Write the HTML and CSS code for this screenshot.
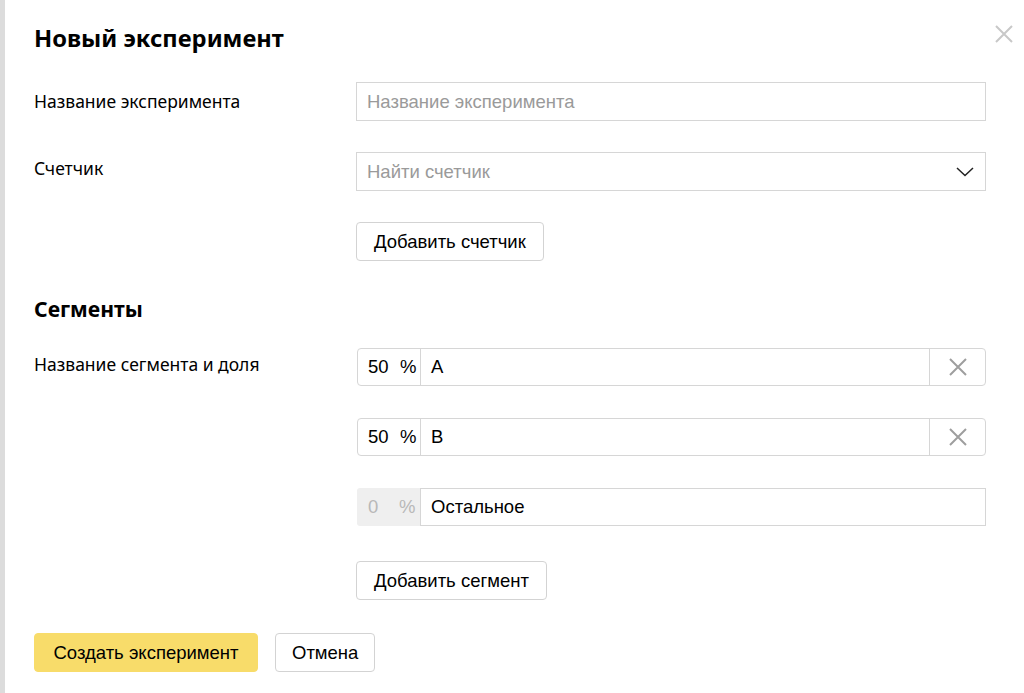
FILE: index.html
```html
<!DOCTYPE html>
<html lang="ru">
<head>
<meta charset="utf-8">
<title>Новый эксперимент</title>
<link rel="stylesheet" href="styles.css">
</head>
<body>
<div class="strip"></div>
<main class="dialog">
  <button class="close" aria-label="Закрыть">
    <svg width="18" height="18" viewBox="0 0 18 18"><path d="M1 1L17 17M17 1L1 17" stroke="#c8c8c8" stroke-width="2" fill="none"/></svg>
  </button>
  <h1 class="title">Новый эксперимент</h1>

  <div class="row row-first">
    <div class="label">Название эксперимента</div>
    <div class="field"><input class="input" placeholder="Название эксперимента"></div>
  </div>

  <div class="row row-gap">
    <div class="label label-counter">Счетчик</div>
    <div class="field">
      <div class="select">
        <span class="placeholder">Найти счетчик</span>
        <svg class="chevron" width="18" height="10" viewBox="0 0 18 10"><path d="M1 1L9 8.5L17 1" stroke="#222" stroke-width="1.5" fill="none"/></svg>
      </div>
    </div>
  </div>

  <div class="row row-gap">
    <div class="label"></div>
    <div class="field"><button class="btn">Добавить счетчик</button></div>
  </div>

  <h2 class="subtitle">Сегменты</h2>

  <div class="row row-seg-first">
    <div class="label label-seg">Название сегмента и доля</div>
    <div class="field segs">
      <div class="seg">
        <div class="pct"><span class="num">50</span><span class="sign">%</span></div>
        <div class="name">A</div>
        <div class="del"><svg width="18" height="18" viewBox="0 0 18 18"><path d="M1 1L17 17M17 1L1 17" stroke="#9e9e9e" stroke-width="2" fill="none"/></svg></div>
      </div>
      <div class="seg">
        <div class="pct"><span class="num">50</span><span class="sign">%</span></div>
        <div class="name">B</div>
        <div class="del"><svg width="18" height="18" viewBox="0 0 18 18"><path d="M1 1L17 17M17 1L1 17" stroke="#9e9e9e" stroke-width="2" fill="none"/></svg></div>
      </div>
      <div class="seg seg-rest">
        <div class="pct pct-disabled"><span class="num">0</span><span class="sign">%</span></div>
        <div class="name name-rest">Остальное</div>
      </div>
    </div>
  </div>

  <div class="row row-addseg">
    <div class="label"></div>
    <div class="field"><button class="btn">Добавить сегмент</button></div>
  </div>

  <div class="footer">
    <button class="btn btn-primary">Создать эксперимент</button>
    <button class="btn btn-cancel">Отмена</button>
  </div>
</main>
</body>
</html>
```
FILE: styles.css
```css
* { box-sizing: border-box; }
html, body { margin: 0; height: 100%; }
body {
  display: flex;
  background: #fff;
  color: #000;
  font-family: "Noto Sans", "Open Sans", sans-serif;
}
.strip {
  width: 5px;
  flex: none;
  background: #dcdcdc;
}
.dialog {
  position: relative;
  flex: 1;
  padding: 0 38px 0 29px;
}
.close {
  position: absolute;
  top: 24px;
  right: 10px;
  width: 20px;
  height: 20px;
  padding: 1px;
  border: 0;
  background: none;
}
.title {
  margin: 21px 0 0;
  font-size: 23.7px;
  line-height: 34px;
  font-weight: 700;
}
.subtitle {
  margin: 33px 0 0;
  font-size: 21.2px;
  line-height: 30px;
  font-weight: 700;
}
.row {
  display: grid;
  grid-template-columns: 322px 1fr;
}
.row-first { margin-top: 27px; }
.row-gap { margin-top: 31px; }
.row-seg-first { margin-top: 24px; }
.row-addseg { margin-top: 35px; }
.label {
  font-size: 17.5px;
  line-height: 24px;
  padding-top: 7px;
}
.label-counter { padding-top: 4px; }
.label-seg { padding-top: 4px; }
.input, .select {
  display: flex;
  align-items: center;
  width: 100%;
  height: 39px;
  margin: 0;
  padding: 0 10px;
  border: 1px solid #d6d6d6;
  border-radius: 0;
  font: 18.5px "Liberation Sans", Arial, sans-serif;
  color: #000;
  outline: none;
}
.input::placeholder { color: #9a9a9a; }
.placeholder { color: #9a9a9a; flex: 1; }
.chevron { margin-right: 1px; }
.btn {
  height: 39px;
  padding: 0 17px;
  border: 1px solid #d3d3d3;
  border-radius: 4px;
  background: #fff;
  font: 18.5px "Liberation Sans", Arial, sans-serif;
  color: #000;
}
.btn-cancel { padding: 0 16px; }
.btn-primary {
  background: #f8dc6a;
  border-color: #f8dc6a;
  width: 224px;
  padding: 0;
}
.segs {
  display: flex;
  flex-direction: column;
  gap: 32px;
  padding-left: 1px;
}
.seg {
  display: flex;
  height: 38px;
  border: 1px solid #d6d6d6;
  border-radius: 4px;
  font: 18.5px "Liberation Sans", Arial, sans-serif;
}
.pct {
  width: 63px;
  flex: none;
  display: flex;
  align-items: center;
  padding-left: 10px;
  border-right: 1px solid #d6d6d6;
}
.num { width: 32px; }
.pct-disabled {
  background: #efefef;
  color: #b8b8b8;
  border-radius: 3px 0 0 3px;
}
.pct-disabled .num { padding-left: 1px; }
.name {
  flex: 1;
  display: flex;
  align-items: center;
  padding-left: 10px;
}
.del {
  width: 56px;
  flex: none;
  display: flex;
  align-items: center;
  justify-content: center;
  border-left: 1px solid #d6d6d6;
}
.seg-rest {
  border: 0;
}
.seg-rest .pct { border: 0; }
.name-rest {
  border: 1px solid #d6d6d6;
}
.footer {
  display: flex;
  gap: 17px;
  margin-top: 33px;
}
```
